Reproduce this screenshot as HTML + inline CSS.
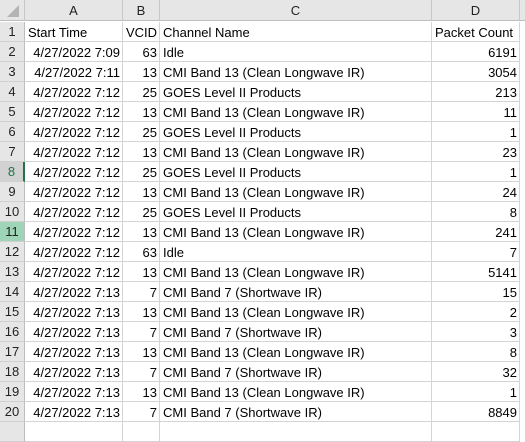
<!DOCTYPE html><html><head><style>
body{margin:0;width:525px;height:426px;background:#fff;position:relative;overflow:hidden;font-family:"Liberation Sans",sans-serif;font-size:13px;color:#000}
.ch{position:absolute;top:0;height:21px;line-height:22px;text-align:center;color:#222;border-right:1px solid #c6c6c6;box-sizing:border-box;background:#e6e6e6;border-bottom:1px solid #bdbdbd}
.rh{position:absolute;left:0;width:25px;height:20px;line-height:20px;text-align:center;background:#e6e6e6;border-bottom:1px solid #d0d0d0;border-right:1px solid #bdbdbd;box-sizing:border-box;color:#222}
.c{position:absolute;height:20px;line-height:21px;border-right:1px solid #d4d4d4;border-bottom:1px solid #d4d4d4;box-sizing:border-box;white-space:nowrap;overflow:visible;padding:0 2px 0 3px}
.r{text-align:right}
</style></head><body>
<div class="ch" style="left:0;width:25px"><svg width="25" height="21"><polygon points="19,5 19,17 7,17" fill="#b4b4b4"/></svg></div>
<div class="ch" style="left:25px;width:98px">A</div>
<div class="ch" style="left:123px;width:37px">B</div>
<div class="ch" style="left:160px;width:272px">C</div>
<div class="ch" style="left:432px;width:88px">D</div>
<div class="ch" style="left:520px;width:5px;border-right:none"></div>
<div id="g"></div>
<script>
var d=[["Start Time","VCID","Channel Name","Packet Count",1],
["4/27/2022 7:09",63,"Idle",6191],["4/27/2022 7:11",13,"CMI Band 13 (Clean Longwave IR)",3054],
["4/27/2022 7:12",25,"GOES Level II Products",213],["4/27/2022 7:12",13,"CMI Band 13 (Clean Longwave IR)",11],
["4/27/2022 7:12",25,"GOES Level II Products",1],["4/27/2022 7:12",13,"CMI Band 13 (Clean Longwave IR)",23],
["4/27/2022 7:12",25,"GOES Level II Products",1],["4/27/2022 7:12",13,"CMI Band 13 (Clean Longwave IR)",24],
["4/27/2022 7:12",25,"GOES Level II Products",8],["4/27/2022 7:12",13,"CMI Band 13 (Clean Longwave IR)",241],
["4/27/2022 7:12",63,"Idle",7],["4/27/2022 7:12",13,"CMI Band 13 (Clean Longwave IR)",5141],
["4/27/2022 7:13",7,"CMI Band 7 (Shortwave IR)",15],["4/27/2022 7:13",13,"CMI Band 13 (Clean Longwave IR)",2],
["4/27/2022 7:13",7,"CMI Band 7 (Shortwave IR)",3],["4/27/2022 7:13",13,"CMI Band 13 (Clean Longwave IR)",8],
["4/27/2022 7:13",7,"CMI Band 7 (Shortwave IR)",32],["4/27/2022 7:13",13,"CMI Band 13 (Clean Longwave IR)",1],
["4/27/2022 7:13",7,"CMI Band 7 (Shortwave IR)",8849]];
var h="";
for(var i=0;i<21;i++){var y=22+i*20;
if(i<20){var st="";if(i==7)st="background:#d2d2d2;color:#217346;border-right:2px solid #217346;";if(i==10)st="background:#9fd5b7;";
h+='<div class="rh" style="top:'+y+'px;'+st+'">'+(i+1)+'</div>';
var r=d[i],hd=i==0;
h+='<div class="c'+(hd?'':' r')+'" style="top:'+y+'px;left:25px;width:98px">'+r[0]+'</div>';
h+='<div class="c'+(hd?'':' r')+'" style="top:'+y+'px;left:123px;width:37px">'+r[1]+'</div>';
h+='<div class="c" style="top:'+y+'px;left:160px;width:272px">'+r[2]+'</div>';
h+='<div class="c'+(hd?'':' r')+'" style="top:'+y+'px;left:432px;width:88px">'+r[3]+'</div>';}
else{h+='<div class="rh" style="top:'+y+'px"></div>';
h+='<div class="c" style="top:'+y+'px;left:25px;width:98px"></div><div class="c" style="top:'+y+'px;left:123px;width:37px"></div><div class="c" style="top:'+y+'px;left:160px;width:272px"></div><div class="c" style="top:'+y+'px;left:432px;width:88px"></div>';}}
document.getElementById("g").innerHTML=h;
</script>
</body></html>
